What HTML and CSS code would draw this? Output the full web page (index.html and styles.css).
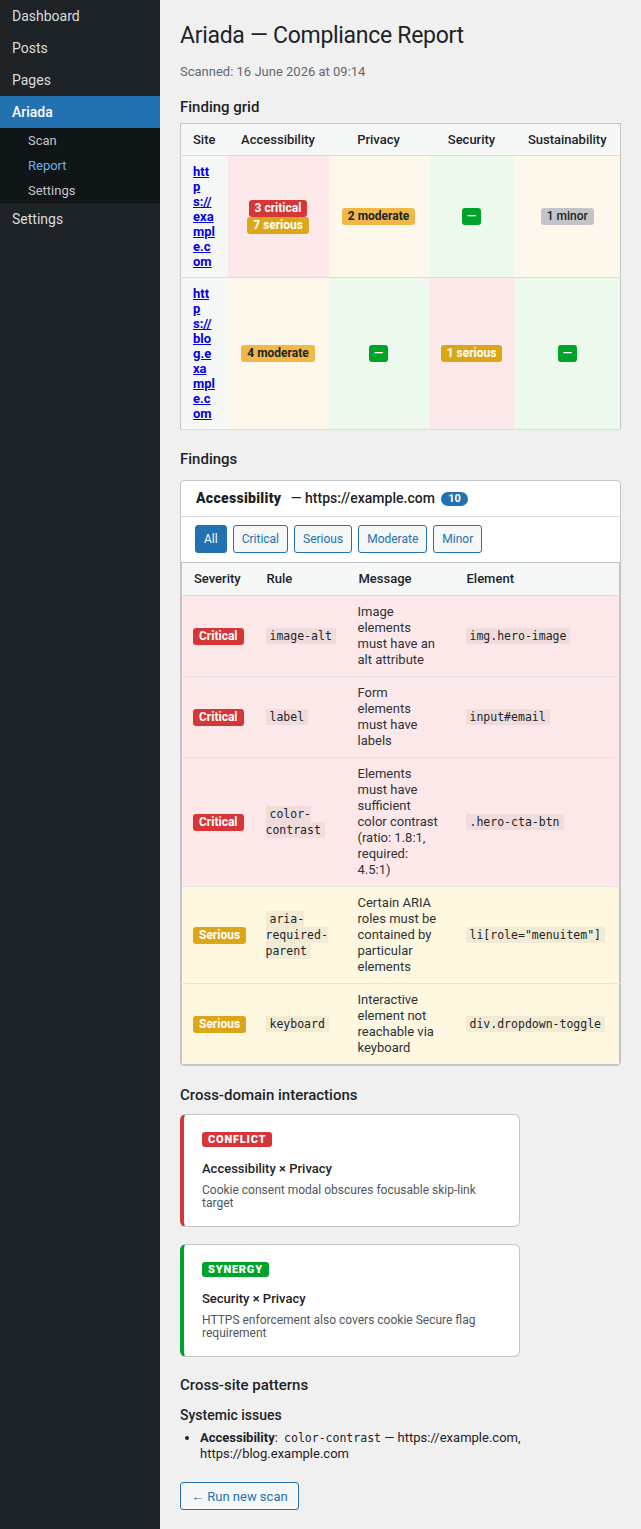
FILE: index.html
```html
<!DOCTYPE html>
<html lang="en">
<head>
    <meta charset="UTF-8">
    <meta name="viewport" content="width=device-width, initial-scale=1.0">
    <title>Ariada — Compliance Report</title>
    <link rel="stylesheet" href="styles.css">
</head>
<body>
<div class="layout">
    <nav class="sidebar">
        <ul class="menu">
            <li><a href="#">Dashboard</a></li>
            <li><a href="#">Posts</a></li>
            <li><a href="#">Pages</a></li>
            <li class="current">
                <a href="#">Ariada</a>
                <ul class="submenu">
                    <li><a href="#">Scan</a></li>
                    <li class="active"><a href="#">Report</a></li>
                    <li><a href="#">Settings</a></li>
                </ul>
            </li>
            <li><a href="#">Settings</a></li>
        </ul>
    </nav>

    <main class="content">
        <h1 class="page-title">Ariada — Compliance Report</h1>
        <p class="scanned">Scanned: 16 June 2026 at 09:14</p>

        <h2 class="section-title first">Finding grid</h2>
        <table class="grid">
            <colgroup>
                <col class="col-site">
                <col class="col-acc">
                <col class="col-priv">
                <col class="col-sec">
                <col>
            </colgroup>
            <thead>
                <tr>
                    <th class="site-head">Site</th>
                    <th>Accessibility</th>
                    <th>Privacy</th>
                    <th>Security</th>
                    <th>Sustainability</th>
                </tr>
            </thead>
            <tbody>
                <tr>
                    <td class="site-cell"><a href="#">htt<br>p<br>s://<br>exa<br>mpl<br>e.c<br>om</a></td>
                    <td class="cell-red">
                        <div class="badge-stack">
                            <span class="badge badge-critical">3 critical</span>
                            <span class="badge badge-serious">7 serious</span>
                        </div>
                    </td>
                    <td class="cell-amber"><span class="badge badge-moderate">2 moderate</span></td>
                    <td class="cell-green"><span class="badge badge-pass">—</span></td>
                    <td class="cell-amber"><span class="badge badge-minor">1 minor</span></td>
                </tr>
                <tr>
                    <td class="site-cell"><a href="#">htt<br>p<br>s://<br>blo<br>g.e<br>xa<br>mpl<br>e.c<br>om</a></td>
                    <td class="cell-amber"><span class="badge badge-moderate">4 moderate</span></td>
                    <td class="cell-green"><span class="badge badge-pass">—</span></td>
                    <td class="cell-red"><span class="badge badge-serious">1 serious</span></td>
                    <td class="cell-green"><span class="badge badge-pass">—</span></td>
                </tr>
            </tbody>
        </table>

        <h2 class="section-title">Findings</h2>
        <div class="panel">
            <h3 class="panel-head"><strong>Accessibility</strong> — https://example.com <span class="count">10</span></h3>
            <div class="filters">
                <button class="filter active">All</button>
                <button class="filter">Critical</button>
                <button class="filter">Serious</button>
                <button class="filter">Moderate</button>
                <button class="filter">Minor</button>
            </div>
            <table class="findings">
                <colgroup>
                    <col class="col-sev">
                    <col class="col-rule">
                    <col class="col-msg">
                    <col>
                </colgroup>
                <thead>
                    <tr>
                        <th>Severity</th>
                        <th>Rule</th>
                        <th>Message</th>
                        <th>Element</th>
                    </tr>
                </thead>
                <tbody>
                    <tr class="row-critical">
                        <td><span class="badge badge-critical">Critical</span></td>
                        <td><code>image-alt</code></td>
                        <td class="msg">Image elements must have an alt attribute</td>
                        <td><code>img.hero-image</code></td>
                    </tr>
                    <tr class="row-critical">
                        <td><span class="badge badge-critical">Critical</span></td>
                        <td><code>label</code></td>
                        <td class="msg">Form elements must have labels</td>
                        <td><code>input#email</code></td>
                    </tr>
                    <tr class="row-critical">
                        <td><span class="badge badge-critical">Critical</span></td>
                        <td><code>color-contrast</code></td>
                        <td class="msg">Elements must have sufficient color contrast (ratio: 1.8:1, required: 4.5:1)</td>
                        <td><code>.hero-cta-btn</code></td>
                    </tr>
                    <tr class="row-serious">
                        <td><span class="badge badge-serious">Serious</span></td>
                        <td><code>aria-required-parent</code></td>
                        <td class="msg">Certain ARIA roles must be contained by particular elements</td>
                        <td><code>li[role="menuitem"]</code></td>
                    </tr>
                    <tr class="row-serious">
                        <td><span class="badge badge-serious">Serious</span></td>
                        <td><code>keyboard</code></td>
                        <td class="msg">Interactive element not reachable via keyboard</td>
                        <td><code>div.dropdown-toggle</code></td>
                    </tr>
                </tbody>
            </table>
        </div>

        <h2 class="section-title tight">Cross-domain interactions</h2>
        <div class="interaction conflict">
            <span class="tag">Conflict</span>
            <h4 class="interaction-title">Accessibility × Privacy</h4>
            <p class="interaction-desc">Cookie consent modal obscures focusable skip-link target</p>
        </div>
        <div class="interaction synergy">
            <span class="tag">Synergy</span>
            <h4 class="interaction-title">Security × Privacy</h4>
            <p class="interaction-desc">HTTPS enforcement also covers cookie Secure flag requirement</p>
        </div>

        <h2 class="section-title patterns">Cross-site patterns</h2>
        <h3 class="sub-title">Systemic issues</h3>
        <ul class="patterns-list">
            <li><strong>Accessibility</strong>: <code class="plain">color-contrast</code> — https://example.com, https://blog.example.com</li>
        </ul>

        <div class="actions">
            <button class="back-btn">← Run new scan</button>
        </div>
    </main>
</div>
</body>
</html>
```

FILE: styles.css
```css
body {
    margin: 0;
    font-family: Roboto, "Liberation Sans", sans-serif;
    font-size: 13px;
    color: #1d2327;
    background-color: #f0f0f1;
}
.layout {
    display: flex;
    min-height: 100vh;
}

/* sidebar */
.sidebar {
    width: 160px;
    flex-shrink: 0;
    background-color: #1d2327;
}
.menu, .submenu {
    list-style: none;
    margin: 0;
    padding: 0;
}
.menu > li > a {
    display: block;
    height: 32px;
    line-height: 32px;
    padding-left: 12px;
    font-size: 14px;
    color: #dcdcde;
    text-decoration: none;
}
.menu > li.current > a {
    background-color: #2271b1;
    color: #fff;
    font-weight: 500;
}
.submenu {
    background-color: #101517;
}
.submenu a {
    display: block;
    height: 25px;
    line-height: 25px;
    padding-left: 28px;
    font-size: 13px;
    color: #c3c4c7;
    text-decoration: none;
}
.submenu .active a {
    color: #72aee6;
}

/* main */
.content {
    flex: 1;
    min-width: 0;
    padding: 21px 20px 21px;
}
.page-title {
    margin: 0;
    font-size: 23px;
    font-weight: 400;
    line-height: 30px;
    letter-spacing: -0.3px;
}
.scanned {
    margin: 12px 0 0;
    color: #646970;
    line-height: 18px;
}
.section-title {
    margin: 19px 0 11px;
    font-size: 15px;
    font-weight: 500;
    line-height: 20px;
}
.section-title.first {
    margin: 16px 0 6px;
}
.section-title.tight {
    margin-bottom: 9px;
}

/* badges */
.badge {
    display: inline-block;
    padding: 0 6px;
    border-radius: 3px;
    font-size: 12px;
    font-weight: 700;
    line-height: 17px;
    color: #fff;
}
.badge-critical { background-color: #d63638; }
.badge-serious { background-color: #dba617; }
.badge-moderate { background-color: #f0b849; color: #1d2327; }
.badge-minor { background-color: #c3c4c7; color: #1d2327; font-weight: 500; }
.badge-pass { background-color: #00a32a; padding: 0 5px; }
.badge-stack {
    display: flex;
    flex-direction: column;
    align-items: center;
}

/* finding grid */
.grid {
    width: 100%;
    table-layout: fixed;
    border-collapse: collapse;
    border: 1px solid #c3c4c7;
    background-color: #fff;
}
.col-site { width: 47px; }
.col-acc { width: 101px; }
.col-priv { width: 100px; }
.col-sec { width: 86px; }
.grid th {
    padding: 8px 4px;
    background-color: #f6f7f7;
    border-bottom: 1px solid #dcdcde;
    font-weight: 500;
    line-height: 15px;
    text-align: center;
}
.grid th.site-head {
    padding-left: 12px;
    text-align: left;
}
.grid td {
    padding: 8px 4px;
    border-bottom: 1px solid #dcdcde;
    line-height: 15px;
    text-align: center;
    vertical-align: middle;
}
.grid td.site-cell {
    padding-left: 12px;
    text-align: left;
    background-color: #f6f7f7;
}
.site-cell a {
    color: #0000ee;
    font-weight: 700;
}
.cell-red { background-color: #fce8e9; }
.cell-amber { background-color: #fef7ec; }
.cell-green { background-color: #edf9ed; }

/* findings panel */
.panel {
    background-color: #fff;
    border: 1px solid #c3c4c7;
    border-radius: 4px;
    overflow: hidden;
}
.panel-head {
    margin: 0;
    padding: 9px 15px;
    border-bottom: 1px solid #dcdcde;
    font-size: 14px;
    font-weight: 500;
    line-height: 17px;
}
.panel-head strong {
    font-weight: 900;
    letter-spacing: 0.3px;
    margin-right: 6px;
}
.count {
    display: inline-block;
    margin-left: 3px;
    padding: 0 7px;
    border-radius: 8px;
    background-color: #2271b1;
    color: #fff;
    font-size: 11px;
    font-weight: 700;
    line-height: 14px;
    vertical-align: 1px;
}
.filters {
    display: flex;
    gap: 6px;
    padding: 8px 14px 9px;
}
.filter {
    height: 28px;
    padding: 0 8px;
    border: 1px solid #2271b1;
    border-radius: 3px;
    background-color: #f6f7f7;
    color: #2271b1;
    font-family: inherit;
    font-size: 12px;
    cursor: pointer;
}
.filter.active {
    background-color: #2271b1;
    color: #fff;
}
.findings {
    width: 100%;
    table-layout: fixed;
    border-collapse: collapse;
    border: 1px solid #c3c4c7;
}
.col-sev { width: 73px; }
.col-rule { width: 92px; }
.col-msg { width: 108px; }
.findings th {
    padding: 8px 8px 8px 12px;
    background-color: #f6f7f7;
    border-bottom: 1px solid #dcdcde;
    font-weight: 500;
    line-height: 16px;
    text-align: left;
}
.findings td {
    padding: 8px 8px 8px 11px;
    border-bottom: 1px solid #e4e4e6;
    color: #2c3338;
    line-height: 16px;
    vertical-align: middle;
}
.findings td.msg {
    padding-right: 14px;
}
.findings tr:last-child td {
    border-bottom: 0;
}
.row-critical td { background-color: #fce8e9; }
.row-serious td { background-color: #fef8e0; }
code {
    font-family: "DejaVu Sans Mono", "Liberation Mono", monospace;
    font-size: 11.5px;
    line-height: 15px;
    padding: 1px 4px;
    background-color: rgba(0, 0, 0, 0.05);
    color: #1d2327;
}
code.plain {
    background: none;
    padding: 0;
    margin-left: 3px;
}

/* interactions */
.interaction {
    width: 340px;
    box-sizing: border-box;
    margin-bottom: 17px;
    padding: 16px 18px;
    background-color: #fff;
    border: 1px solid #c3c4c7;
    border-left: 4px solid;
    border-radius: 6px;
}
.interaction.conflict { border-left-color: #d63638; }
.interaction.synergy { border-left-color: #00a32a; }
.tag {
    display: inline-block;
    padding: 0 6px;
    border-radius: 3px;
    color: #fff;
    font-size: 11px;
    font-weight: 900;
    letter-spacing: 0.8px;
    line-height: 15px;
    text-transform: uppercase;
}
.conflict .tag { background-color: #d63638; }
.synergy .tag { background-color: #00a32a; }
.interaction-title {
    margin: 13px 0 0;
    font-size: 13px;
    font-weight: 500;
    line-height: 18px;
}
.interaction-desc {
    margin: 6px 0 0;
    color: #50575e;
    font-size: 12px;
    line-height: 13px;
}

/* cross-site */
.section-title.patterns {
    margin-top: 18px;
}
.sub-title {
    margin: 5px 0 6px;
    font-size: 14px;
    font-weight: 500;
    line-height: 18px;
}
.patterns-list {
    margin: 0;
    padding-left: 20px;
    line-height: 16px;
}
.actions {
    display: flex;
    margin-top: 20px;
}
.back-btn {
    height: 28px;
    padding: 0 10px;
    border: 1px solid #2271b1;
    border-radius: 3px;
    background-color: #f6f7f7;
    color: #2271b1;
    font-family: inherit;
    font-size: 13px;
    cursor: pointer;
}
```
